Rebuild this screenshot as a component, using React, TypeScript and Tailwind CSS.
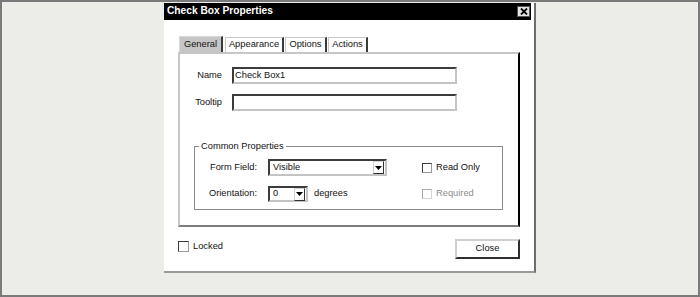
import React from "react";

const Check = ({ disabled = false, size = "w-[10px] h-[10px]" }: { disabled?: boolean; size?: string }) => (
  <span
    className={`${size} shrink-0 bg-white border ${
      disabled
        ? "border-t-[#a8a8a8] border-l-[#a8a8a8] border-r-[#d6d6d6] border-b-[#d6d6d6]"
        : "border-t-[#3a3a3a] border-l-[#3a3a3a] border-r-[#9a9a9a] border-b-[#9a9a9a]"
    }`}
  />
);

const DropArrow = () => (
  <span className="w-[11px] h-[13px] mr-[1px] flex items-center justify-center bg-white border-l border-t border-[#d0d0d0] border-r border-r-[#303030] border-b border-b-[#303030]">
    <svg width="7" height="4" viewBox="0 0 7 4">
      <polygon points="0,0 7,0 3.5,4" fill="#000" />
    </svg>
  </span>
);

const Select = ({ value, width, height }: { value: string; width: string; height: string }) => (
  <div
    className={`${width} ${height} flex items-center justify-between bg-white border-2 border-t-[#3c3c3c] border-l-[#3c3c3c] border-r-[#c4c4c4] border-b-[#c4c4c4]`}
  >
    <span className="pl-[3px]">{value}</span>
    <DropArrow />
  </div>
);

const TextBox = ({ value }: { value?: string }) => (
  <div className="w-[225px] h-[17px] flex items-center bg-white border-2 border-t-[#3c3c3c] border-l-[#3c3c3c] border-r-[#c4c4c4] border-b-[#c4c4c4]">
    <span className="pl-[1px]">{value}</span>
  </div>
);

const tabs = [
  { label: "Appearance", w: "w-[59px]", ml: "ml-[2px]" },
  { label: "Options", w: "w-[42px]", ml: "ml-[1px]" },
  { label: "Actions", w: "w-[40px]", ml: "ml-[1px]" },
];

export default function App() {
  return (
    <div className="w-[700px] h-[297px] border-2 border-[#7a7a7a] bg-[#ecece8] pl-[162px] pt-[1px] font-['Liberation_Sans',Arial,sans-serif] text-[9.3px] leading-none text-[#111]">
      <div className="w-[372px] h-[270px] bg-white border-r-2 border-r-[#6e6e6e] border-b-2 border-b-[#9a9a9a] flex flex-col">
        {/* title bar */}
        <div className="h-[17px] mr-[3px] bg-black flex items-center justify-between pl-[3px] pr-[1px]">
          <span className="text-white font-bold text-[10.2px]">Check Box Properties</span>
          <span className="w-[13px] h-[11px] bg-[#e4e4e4] border border-[#555] flex items-center justify-center">
            <svg width="8" height="7" viewBox="0 0 8 7">
              <path d="M1 0.5 L7 6.5 M7 0.5 L1 6.5" stroke="#000" strokeWidth="1.8" />
            </svg>
          </span>
        </div>

        {/* tabs */}
        <div className="mt-[16px] ml-[15px] flex items-end">
          <div className="w-[44px] h-[16px] bg-[#c6c6c6] border-t border-l border-[#d8d8d8] border-r-2 border-r-[#3a3a3a] flex items-center justify-center">
            General
          </div>
          {tabs.map((t) => (
            <div
              key={t.label}
              className={`${t.w} ${t.ml} h-[15px] bg-white border-t border-l border-[#c8c8c8] border-r-2 border-r-[#3a3a3a] flex items-center justify-center`}
            >
              {t.label}
            </div>
          ))}
        </div>

        {/* tab panel */}
        <div className="ml-[14px] w-[342px] h-[175px] border-2 border-t-[#c6c6c6] border-l-[#c6c6c6] border-r-black border-b-[#7c7c7c] pt-[13px]">
          <div className="flex items-center">
            <span className="w-[42px] text-right">Name</span>
            <div className="ml-[10px]">
              <TextBox value="Check Box1" />
            </div>
          </div>
          <div className="flex items-center mt-[10px]">
            <span className="w-[42px] text-right">Tooltip</span>
            <div className="ml-[10px]">
              <TextBox />
            </div>
          </div>

          <fieldset className="ml-[14px] mt-[30px] w-[309px] border border-[#8a8a8a] pb-[7px] pt-[7px]">
            <legend className="ml-[4px] px-[2px] leading-[11px]">Common Properties</legend>
            <div className="flex">
              <div className="w-[227px] flex flex-col gap-[10px]">
                <div className="flex items-center h-[17px]">
                  <span className="w-[62px] text-right">Form Field:</span>
                  <div className="ml-[11px]">
                    <Select value="Visible" width="w-[119px]" height="h-[17px]" />
                  </div>
                </div>
                <div className="flex items-center h-[16px]">
                  <span className="w-[62px] text-right">Orientation:</span>
                  <div className="ml-[11px]">
                    <Select value="0" width="w-[40px]" height="h-[16px]" />
                  </div>
                  <span className="ml-[6px]">degrees</span>
                </div>
              </div>
              <div className="flex flex-col gap-[10px]">
                <div className="flex items-center h-[17px]">
                  <Check />
                  <span className="ml-[4px]">Read Only</span>
                </div>
                <div className="flex items-center h-[16px]">
                  <Check disabled />
                  <span className="ml-[4px] text-[#8c8c8c]">Required</span>
                </div>
              </div>
            </div>
          </fieldset>
        </div>

        {/* footer */}
        <div className="ml-[14px] w-[342px] mt-[12px] flex justify-between items-start">
          <div className="flex items-center mt-[2px]">
            <Check size="w-[11px] h-[11px]" />
            <span className="ml-[4px]">Locked</span>
          </div>
          <div className="w-[65px] h-[20px] bg-white border-2 border-t-[#cfcfcf] border-l-[#cfcfcf] border-r-[#2e2e2e] border-b-[#2e2e2e] flex items-center justify-center">
            Close
          </div>
        </div>
      </div>
    </div>
  );
}
